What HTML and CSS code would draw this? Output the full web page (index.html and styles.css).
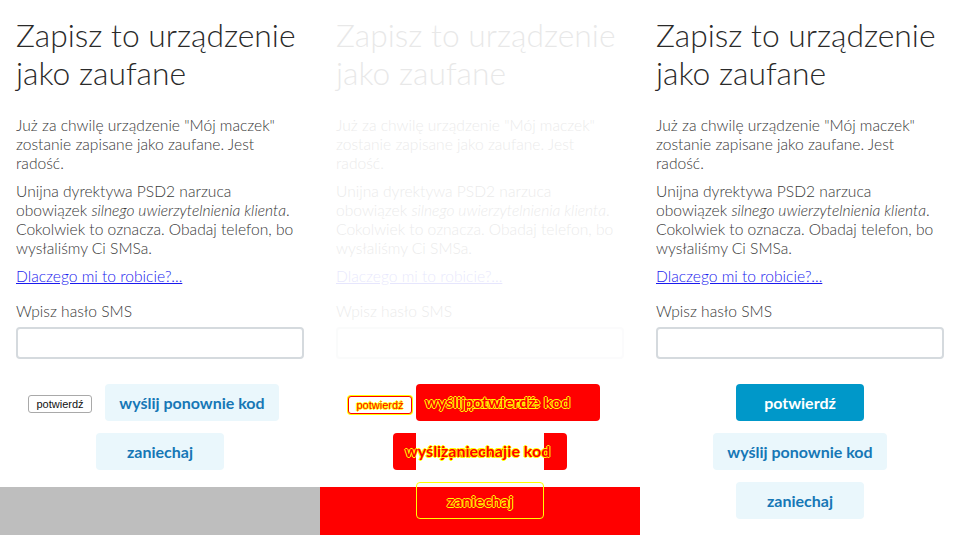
FILE: index.html
```html
<!DOCTYPE html>
<html lang="pl">
<head>
<meta charset="utf-8">
<title>Zapisz to urządzenie jako zaufane</title>
<link rel="stylesheet" href="styles.css">
</head>
<body>
<div class="shots">
  <section class="col col-actual">
    <div class="content">
      <h1 class="title">Zapisz to urządzenie jako zaufane</h1>
      <p class="text">Już za chwilę urządzenie "Mój maczek" zostanie zapisane jako zaufane. Jest radość.</p>
      <p class="text">Unijna dyrektywa PSD2 narzuca obowiązek <em>silnego uwierzytelnienia klienta</em>. Cokolwiek to oznacza. Obadaj telefon, bo wysłaliśmy Ci SMSa.</p>
      <p class="text"><a href="#" class="link">Dlaczego mi to robicie?...</a></p>
      <label class="label">Wpisz hasło SMS</label>
      <div class="input"></div>
      <div class="actions-broken">
        <div class="row-broken">
          <button class="native-btn">potwierdź</button>
          <span class="btn btn-light btn-wide">wyślij ponownie kod</span>
        </div>
        <span class="btn btn-light">zaniechaj</span>
      </div>
    </div>
    <div class="gray-band"></div>
  </section>

  <section class="col col-diff">
    <div class="content faded">
      <h1 class="title">Zapisz to urządzenie jako zaufane</h1>
      <p class="text">Już za chwilę urządzenie "Mój maczek" zostanie zapisane jako zaufane. Jest radość.</p>
      <p class="text">Unijna dyrektywa PSD2 narzuca obowiązek <em>silnego uwierzytelnienia klienta</em>. Cokolwiek to oznacza. Obadaj telefon, bo wysłaliśmy Ci SMSa.</p>
      <p class="text"><a href="#" class="link">Dlaczego mi to robicie?...</a></p>
      <label class="label">Wpisz hasło SMS</label>
      <div class="input"></div>
    </div>
    <div class="diff diff-small"><span class="dtext dtext-small">potwierdź</span></div>
    <div class="diff diff-row1">
      <span class="dtext d-r1a">wyślij ponownie kod</span>
      <span class="dtext d-r1b">potwierdź</span>
    </div>
    <div class="diff diff-row2">
      <div class="diff-hole"></div>
      <span class="dtext d-r2a">wyślij ponownie kod</span>
      <span class="dtext d-r2b">zaniechaj</span>
    </div>
    <div class="diff diff-band"></div>
    <div class="diff-outline diff-row3"><span class="dtext">zaniechaj</span></div>
  </section>

  <section class="col col-expected">
    <div class="content">
      <h1 class="title">Zapisz to urządzenie jako zaufane</h1>
      <p class="text">Już za chwilę urządzenie "Mój maczek" zostanie zapisane jako zaufane. Jest radość.</p>
      <p class="text">Unijna dyrektywa PSD2 narzuca obowiązek <em>silnego uwierzytelnienia klienta</em>. Cokolwiek to oznacza. Obadaj telefon, bo wysłaliśmy Ci SMSa.</p>
      <p class="text"><a href="#" class="link">Dlaczego mi to robicie?...</a></p>
      <label class="label">Wpisz hasło SMS</label>
      <div class="input"></div>
      <div class="actions">
        <span class="btn btn-primary">potwierdź</span>
        <span class="btn btn-light btn-wide">wyślij ponownie kod</span>
        <span class="btn btn-light">zaniechaj</span>
      </div>
    </div>
  </section>
</div>
</body>
</html>
```

FILE: styles.css
```css
* { box-sizing: border-box; }
html, body {
  margin: 0;
  padding: 0;
  background: #fff;
}
body {
  font-family: Lato, "Open Sans", sans-serif;
  color: #333;
}
.shots {
  display: grid;
  grid-template-columns: repeat(3, 320px);
  height: 535px;
  overflow: hidden;
}
.col {
  position: relative;
  display: flex;
  flex-direction: column;
  height: 535px;
  overflow: hidden;
}
.content {
  padding: 16px 16px 0;
  display: flex;
  flex-direction: column;
}
.title {
  margin: 0 0 24px;
  font-family: "Lato Light", Lato, sans-serif;
  font-size: 31.8px;
  line-height: 38px;
  font-weight: 300;
  color: #2a2a2a;
}
.text {
  margin: 0 0 9px;
  font-family: "Lato Light", Lato, sans-serif;
  font-size: 15.6px;
  line-height: 19px;
  font-weight: 300;
  color: #383838;
}
.text em { font-style: italic; }
.link {
  color: #1a1aee;
  text-decoration: underline;
}
.label {
  display: block;
  margin-top: 7px;
  font-family: "Lato Light", Lato, sans-serif;
  font-size: 15.6px;
  line-height: 19px;
  font-weight: 300;
  color: #383838;
}
.input {
  margin-top: 6px;
  height: 32px;
  border: 2px solid #d5dade;
  border-radius: 4px;
}
.actions {
  margin-top: 25px;
  display: flex;
  flex-direction: column;
  align-items: center;
  gap: 12px;
}
.actions-broken {
  margin-top: 25px;
  display: flex;
  flex-direction: column;
  align-items: center;
  gap: 12px;
  margin-left: -16px;
  margin-right: -16px;
}
.row-broken {
  display: flex;
  align-items: center;
  gap: 13px;
  padding-right: 13px;
}
.btn {
  display: flex;
  align-items: center;
  justify-content: center;
  height: 37px;
  min-width: 128px;
  padding: 0 12px;
  border-radius: 4px;
  font-family: Lato, sans-serif;
  font-size: 16px;
  font-weight: 700;
}
.btn-wide { width: 174px; }
.btn-primary {
  background: #0098c9;
  color: #fff;
}
.btn-light {
  background: #eaf7fc;
  color: #1677b6;
}
.native-btn {
  width: 64px;
  height: 18px;
  margin-top: 3px;
  padding: 0;
  font-family: "Liberation Sans", Arial, sans-serif;
  font-size: 11px;
  line-height: 16px;
  color: #111;
  background: #fff;
  border: 1px solid #a9a9a9;
  border-radius: 3px;
}
.gray-band {
  margin-top: auto;
  height: 48px;
  background: #bebebe;
}
.faded { opacity: 0.1; }

/* diff overlay */
.diff {
  position: absolute;
  background: #ff0000;
  border-radius: 4px;
}
.diff-small {
  left: 28px; top: 396px; width: 64px; height: 18px;
  background: #fff;
  border: 1px solid #ff0000;
  box-shadow: 0 0 0 1px #ffff00;
  border-radius: 3px;
  display: flex; align-items: center; justify-content: center;
}
.diff-row1 { left: 96px; top: 384px; width: 184px; height: 37px; }
.diff-row2 { left: 73px; top: 433px; width: 174px; height: 37px; }
.diff-hole {
  position: absolute;
  left: 23px; top: 0; width: 128px; height: 37px;
  background: #fefefe;
}
.diff-band { left: 0; top: 487px; width: 320px; height: 48px; border-radius: 0; }
.diff-outline {
  position: absolute;
  left: 96px; top: 482px; width: 128px; height: 37px;
  border: 1px solid #ffff00;
  border-radius: 4px;
  display: flex; align-items: center; justify-content: center;
}
.dtext {
  font-family: Lato, sans-serif;
  font-size: 16px;
  font-weight: 700;
  color: #ff0000;
  text-shadow: 1px 0 0 #ffff00, -1px 0 0 #ffff00, 0 1px 0 #ffff00, 0 -1px 0 #ffff00;
  white-space: nowrap;
}
.dtext-small {
  font-family: "Liberation Sans", Arial, sans-serif;
  font-size: 11px;
  font-weight: 400;
}
.d-r1a { position: absolute; left: 9px; top: 8px; }
.d-r1b { position: absolute; left: 48px; top: 8px; }
.d-r2a { position: absolute; left: 12px; top: 8px; }
.d-r2b { position: absolute; left: 48px; top: 8px; }
```
